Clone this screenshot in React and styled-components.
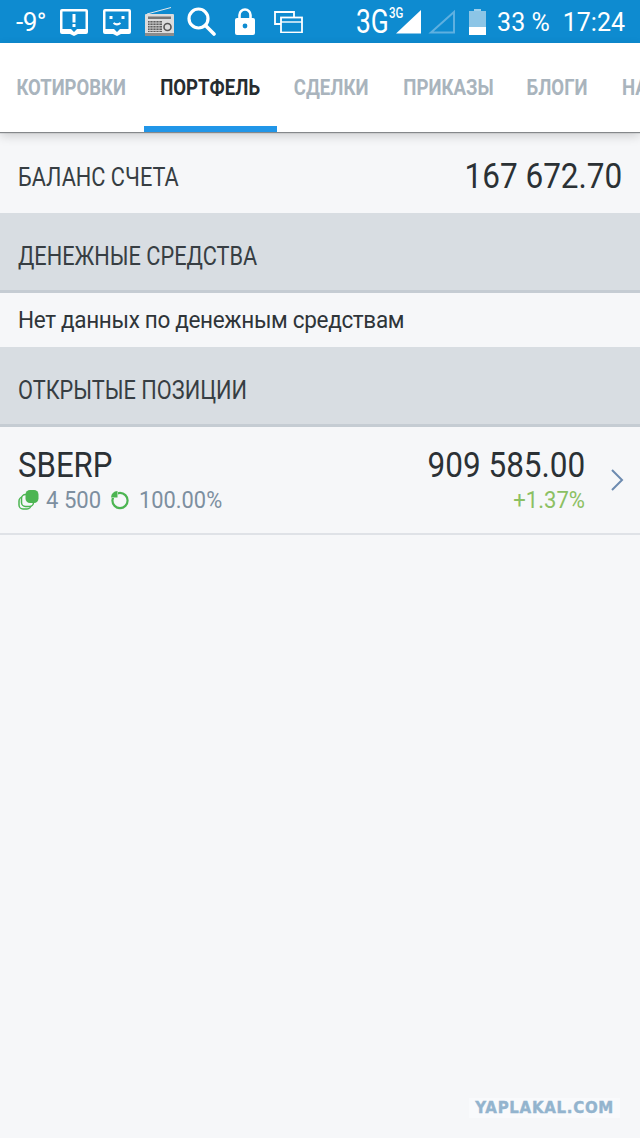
import React from "react"
import styled, { createGlobalStyle } from "styled-components"

const GlobalStyle = createGlobalStyle`
  html, body {
    margin: 0;
    padding: 0;
    background: #f6f7f9;
  }
  * {
    box-sizing: border-box;
  }
`

const Page = styled.div`
  width: 640px;
  height: 1138px;
  overflow: hidden;
  display: flex;
  flex-direction: column;
  position: relative;
  background: #f6f7f9;
  font-family: Roboto, "Liberation Sans", sans-serif;
  color: #2b3135;
`

// Roboto Condensed isn't installed, so regular Roboto gets squeezed horizontally
const Narrow = styled.span`
  display: inline-block;
  white-space: nowrap;
  transform: scaleX(${(p) => p.$x});
  transform-origin: ${(p) => p.$origin || "left"} center;
  margin-left: ${(p) => p.$ml || 0}px;
  margin-right: ${(p) => p.$mr || 0}px;
`

const StatusBar = styled.div`
  height: 43px;
  flex: none;
  background: #0e8bd0;
  color: #fff;
  display: flex;
  align-items: center;
  padding: 0 15px 0 16px;
  font-size: 25px;
`

const StatusLeft = styled.div`
  display: flex;
  align-items: center;
`

const StatusRight = styled.div`
  margin-left: auto;
  display: flex;
  align-items: center;
`

const Slot = styled.span`
  display: flex;
  margin-left: ${(p) => p.$ml || 0}px;
`

const Temp = styled.span`
  width: 31px;
  margin-right: -1px;
  font-size: 26px;
  letter-spacing: -0.5px;
  line-height: 1;
  padding-top: 1px;
`

const StatusText = styled.span`
  line-height: 1;
  padding-top: 2px;
  margin-left: ${(p) => p.$ml || 0}px;
`

const NetworkText = styled(Narrow)`
  font-size: 33px;
  line-height: 1;
  width: 33px;
`

const NetworkBadge = styled.span`
  position: relative;
  display: flex;
  width: 71px;
`

const NetworkSmall = styled(Narrow)`
  position: absolute;
  left: 0;
  top: -3px;
  font-size: 14px;
  font-weight: 500;
  line-height: 1;
`

const Tabs = styled.div`
  height: 89px;
  flex: none;
  background: #fff;
  display: flex;
  box-shadow: 0 1px 1px #85888b, 0 4px 10px rgba(0, 0, 0, 0.16);
  position: relative;
  overflow: hidden;
  z-index: 1;
`

const Tab = styled.div`
  flex: none;
  width: ${(p) => p.$w}px;
  margin-left: ${(p) => p.$ml || 0}px;
  height: 100%;
  display: flex;
  align-items: center;
  justify-content: center;
  position: relative;
  font-size: 22px;
  font-weight: 700;
  white-space: nowrap;
  color: ${(p) => (p.$active ? "#262c30" : "#a9b4bd")};
  &::after {
    content: "";
    display: ${(p) => (p.$active ? "block" : "none")};
    position: absolute;
    left: 0;
    right: 0;
    bottom: 0;
    height: 6px;
    background: #2196e8;
  }
`

const LastTab = styled(Tab)`
  justify-content: flex-start;
  padding-left: 18px;
`

const BalanceRow = styled.div`
  height: 81px;
  flex: none;
  display: flex;
  align-items: center;
  justify-content: space-between;
  padding: 8px 18px 0;
`

const Label = styled.div`
  font-size: 26px;
  color: #373e43;
`

const Balance = styled.div`
  font-size: 35px;
  color: #2b3135;
`

const SectionHeader = styled.div`
  height: 80px;
  flex: none;
  background: #d8dde2;
  border-bottom: 3px solid #c5ccd3;
  display: flex;
  align-items: center;
  padding: 9px 18px 0;
  font-size: 26px;
  color: #373e43;
`

const EmptyRow = styled.div`
  height: 54px;
  flex: none;
  display: flex;
  align-items: center;
  padding: 0 18px;
  font-size: 23.5px;
  letter-spacing: -0.35px;
  color: #2f3539;
`

const PositionRow = styled.div`
  height: 108px;
  flex: none;
  display: flex;
  align-items: center;
  padding: 0 16px 0 18px;
  border-bottom: 2px solid #dfe2e7;
`

const PositionInfo = styled.div`
  display: flex;
  flex-direction: column;
  gap: 1px;
`

const Ticker = styled.div`
  font-size: 35px;
  line-height: 38px;
  color: #2b3135;
`

const MetaRow = styled.div`
  display: flex;
  align-items: center;
  font-size: 24px;
  line-height: 28px;
  color: #7d8fa0;
`

const PositionValues = styled.div`
  margin-left: auto;
  display: flex;
  flex-direction: column;
  align-items: flex-end;
  gap: 1px;
`

const Amount = styled.div`
  font-size: 35px;
  line-height: 38px;
  color: #2b3135;
`

const Change = styled.div`
  font-size: 24px;
  line-height: 28px;
  color: #8cc063;
`

const Chevron = styled.svg`
  width: 14px;
  height: 24px;
  margin-left: 25px;
  flex: none;
`

const Watermark = styled.div`
  position: absolute;
  right: 20px;
  bottom: 20px;
  padding: 1px 6px;
  font-family: "DejaVu Sans", sans-serif;
  font-size: 15px;
  font-weight: 700;
  line-height: 18px;
  letter-spacing: 0.7px;
  color: #93b4ce;
  -webkit-text-stroke: 0.4px #93b4ce;
  background: #f9fafc;
`

function AlertIcon() {
  return (
    <svg width="30" height="28" viewBox="0 0 30 28">
      <path d="M3 1h24a2 2 0 0 1 2 2v21a2 2 0 0 1-2 2h-8l-4 2-4-2H3a2 2 0 0 1-2-2V3a2 2 0 0 1 2-2z" fill="#fff" />
      <path d="M3.500 3.500h23v17.500h-8.500l-3 3-3-3H3.500z" fill="#0e8bd0" />
      <rect x="13.500" y="6" width="3" height="8.500" fill="#fff" />
      <rect x="13.500" y="16" width="3" height="3" fill="#fff" />
    </svg>
  )
}

function FaceIcon() {
  return (
    <svg width="30" height="28" viewBox="0 0 30 28">
      <path d="M3 1h24a2 2 0 0 1 2 2v21a2 2 0 0 1-2 2h-8l-4 2-4-2H3a2 2 0 0 1-2-2V3a2 2 0 0 1 2-2z" fill="#fff" />
      <path d="M3.500 3.500h23v17.500h-8.500l-3 3-3-3H3.500z" fill="#0e8bd0" />
      <rect x="7.500" y="8" width="3" height="3" fill="#fff" />
      <rect x="19.500" y="8" width="3" height="3" fill="#fff" />
      <path d="M11.500 15c2 1.600 5 1.600 7 0" stroke="#fff" strokeWidth="2" fill="none" />
    </svg>
  )
}

function RadioIcon() {
  return (
    <svg width="31" height="29" viewBox="0 0 31 29">
      <path d="M3 7L27 0.500" stroke="#e8eaec" strokeWidth="1" />
      <rect x="1" y="7" width="29" height="22" rx="1" fill="#dcdcdc" />
      <rect x="1" y="26" width="29" height="3" fill="#8c8c8c" />
      <rect x="4" y="9.500" width="23" height="2.500" fill="#777" />
      <rect x="4" y="14" width="14" height="11" fill="#5f5f5f" />
      <path d="M4 16h14M4 18.500h14M4 21h14M4 23.500h14" stroke="#c9c9c9" strokeWidth="1" />
      <path d="M6 14v11M9 14v11M12 14v11M15 14v11" stroke="#c9c9c9" strokeWidth="0.800" />
      <circle cx="23.500" cy="20" r="3.500" fill="#dcdcdc" stroke="#555" strokeWidth="1.600" />
    </svg>
  )
}

function SearchIcon() {
  return (
    <svg width="29" height="29" viewBox="0 0 29 29">
      <circle cx="11.500" cy="11.500" r="9.500" fill="none" stroke="#fff" strokeWidth="3.200" />
      <path d="M18.500 18.500L27 27" stroke="#fff" strokeWidth="3.600" strokeLinecap="round" />
    </svg>
  )
}

function LockIcon() {
  return (
    <svg width="22" height="27" viewBox="0 0 22 27">
      <path d="M5.500 11V7a5.500 5.500 0 0 1 11 0V11" fill="none" stroke="#fff" strokeWidth="2.600" />
      <path d="M3 10h16a2 2 0 0 1 2 2v13a2 2 0 0 1-2 2H3a2 2 0 0 1-2-2V12a2 2 0 0 1 2-2z" fill="#fff" />
      <circle cx="11" cy="18" r="2.400" fill="#0e8bd0" />
    </svg>
  )
}

function WindowsIcon() {
  return (
    <svg width="29" height="22" viewBox="0 0 29 22">
      <path d="M20 6V1H1V13H7" fill="none" stroke="#fff" strokeWidth="1.800" />
      <rect x="7" y="6.500" width="21" height="15" fill="none" stroke="#fff" strokeWidth="1.800" />
      <path d="M7 11h21" stroke="#fff" strokeWidth="1.400" />
    </svg>
  )
}

function SignalIcon() {
  return (
    <svg width="66" height="26" viewBox="0 0 66 26">
      <path d="M0 24.500L25 1V24.500z" fill="#fff" />
      <path d="M35 23.500L58 3V23.500z" fill="none" stroke="#5eb0e0" strokeWidth="2" />
    </svg>
  )
}

function BatteryIcon() {
  return (
    <svg width="17" height="26" viewBox="0 0 17 26">
      <rect x="5" y="0" width="7" height="3" fill="#9fd0ec" />
      <rect x="0" y="2" width="17" height="24" fill="#8cc5e6" />
      <rect x="0" y="18" width="17" height="8" fill="#fff" />
    </svg>
  )
}

function LotsIcon() {
  return (
    <svg width="21" height="21" viewBox="0 0 21 21">
      <rect x="1" y="8" width="12" height="12" rx="4" fill="#f6f7f9" stroke="#4cb552" strokeWidth="1.500" />
      <rect x="3.500" y="5.500" width="12" height="12" rx="4" fill="#f6f7f9" stroke="#4cb552" strokeWidth="1.500" />
      <rect x="7.500" y="1" width="13" height="13" rx="4.500" fill="#4cb552" />
    </svg>
  )
}

function ShareIcon() {
  return (
    <svg width="20" height="20" viewBox="0 0 20 20">
      <circle cx="10" cy="10.500" r="7.600" fill="none" stroke="#4cb552" strokeWidth="2.200" />
      <path d="M0 0h8v8H0z" fill="#f6f7f9" />
      <path d="M1 7.500Q1.500 1.500 7.500 1V7.500z" fill="#4cb552" />
    </svg>
  )
}

export default function App() {
  return (
    <Page>
      <GlobalStyle />
      <StatusBar>
        <StatusLeft>
          <Temp>-9°</Temp>
          <Slot $ml={13}><AlertIcon /></Slot>
          <Slot $ml={13}><FaceIcon /></Slot>
          <Slot $ml={12}><RadioIcon /></Slot>
          <Slot $ml={12}><SearchIcon /></Slot>
          <Slot $ml={18}><LockIcon /></Slot>
          <Slot $ml={18}><WindowsIcon /></Slot>
        </StatusLeft>
        <StatusRight>
          <NetworkText $x={0.8}>3G</NetworkText>
          <NetworkBadge>
            <NetworkSmall $x={0.82}>3G</NetworkSmall>
            <Slot $ml={7}><SignalIcon /></Slot>
          </NetworkBadge>
          <Slot $ml={9}><BatteryIcon /></Slot>
          <StatusText $ml={11}>33 %</StatusText>
          <StatusText $ml={13}>17:24</StatusText>
        </StatusRight>
      </StatusBar>
      <Tabs>
        <Tab $w={143}><Narrow $x={0.84} $origin="center">КОТИРОВКИ</Narrow></Tab>
        <Tab $w={133} $ml={1} $active><Narrow $x={0.845} $origin="center">ПОРТФЕЛЬ</Narrow></Tab>
        <Tab $w={109}><Narrow $x={0.845} $origin="center">СДЕЛКИ</Narrow></Tab>
        <Tab $w={125}><Narrow $x={0.845} $origin="center">ПРИКАЗЫ</Narrow></Tab>
        <Tab $w={93}><Narrow $x={0.845} $origin="center">БЛОГИ</Narrow></Tab>
        <LastTab $w={37}><Narrow $x={0.845}>НАСТРОЙКИ</Narrow></LastTab>
      </Tabs>
      <BalanceRow>
        <Label><Narrow $x={0.836}>БАЛАНС СЧЕТА</Narrow></Label>
        <Balance><Narrow $x={0.9} $origin="right">167 672.70</Narrow></Balance>
      </BalanceRow>
      <SectionHeader><Narrow $x={0.836}>ДЕНЕЖНЫЕ СРЕДСТВА</Narrow></SectionHeader>
      <EmptyRow><Narrow $x={0.959}>Нет данных по денежным средствам</Narrow></EmptyRow>
      <SectionHeader><Narrow $x={0.836}>ОТКРЫТЫЕ ПОЗИЦИИ</Narrow></SectionHeader>
      <PositionRow>
        <PositionInfo>
          <Ticker><Narrow $x={0.89}>SBERP</Narrow></Ticker>
          <MetaRow>
            <LotsIcon />
            <Narrow $x={0.92} $ml={7} $mr={4}>4 500</Narrow>
            <ShareIcon />
            <Narrow $x={0.91} $ml={9}>100.00%</Narrow>
          </MetaRow>
        </PositionInfo>
        <PositionValues>
          <Amount><Narrow $x={0.9} $origin="right">909 585.00</Narrow></Amount>
          <Change><Narrow $x={0.92} $origin="right">+1.37%</Narrow></Change>
        </PositionValues>
        <Chevron viewBox="0 0 14 24">
          <path d="M2 2l10 10L2 22" fill="none" stroke="#6d8bb0" strokeWidth="2" />
        </Chevron>
      </PositionRow>
      <Watermark>YAPLAKAL.COM</Watermark>
    </Page>
  )
}
